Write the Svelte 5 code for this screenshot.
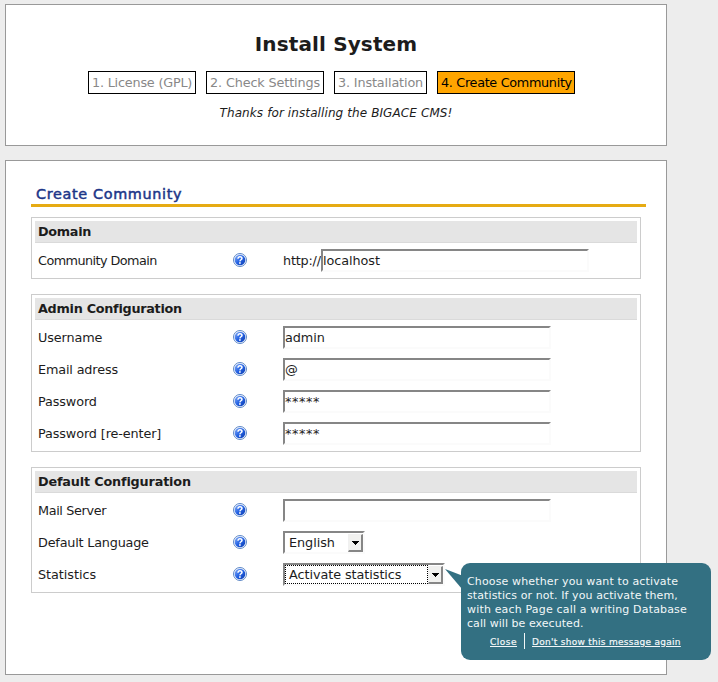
<script>
  // "track" is the letter spacing of a text, in pixels
  const steps = [
    { label: '1. License (GPL)', width: 108, track: -0.2 },
    { label: '2. Check Settings', width: 118, track: -0.13 },
    { label: '3. Installation', width: 93, track: -0.14 },
    { label: '4. Create Community', width: 138, track: -0.32, active: true }
  ];

  const groups = [
    {
      title: 'Domain',
      track: -0.3,
      rows: [{ label: 'Community Domain', track: -0.56, prefix: 'http://', kind: 'text', value: 'localhost' }]
    },
    {
      title: 'Admin Configuration',
      track: -0.28,
      rows: [
        { label: 'Username', track: -0.12, kind: 'text', value: 'admin' },
        { label: 'Email adress', track: -0.15, kind: 'text', value: '@' },
        { label: 'Password', track: -0.12, kind: 'secret', value: '*****' },
        { label: 'Password [re-enter]', track: -0.12, kind: 'secret', value: '*****' }
      ]
    },
    {
      title: 'Default Configuration',
      track: -0.17,
      rows: [
        { label: 'Mail Server', track: -0.36, kind: 'text', value: '' },
        { label: 'Default Language', track: -0.2, kind: 'select', value: 'English', width: 82 },
        { label: 'Statistics', track: -0.05, kind: 'select', value: 'Activate statistics', width: 162, focused: true, tip: true }
      ]
    }
  ];

  const tipLines = [
    { text: 'Choose whether you want to activate', track: 0.14 },
    { text: 'statistics or not. If you activate them,', track: 0.1 },
    { text: 'with each Page call a writing Database', track: 0.17 },
    { text: 'call will be executed.', track: 0.05 }
  ];
</script>

<div class="page">
  <header class="panel top">
    <h1>Install System</h1>
    <div class="steps">
      {#each steps as s}
        <div class="step" class:active={s.active} style="width: {s.width}px; letter-spacing: {s.track}px">{s.label}</div>
      {/each}
    </div>
    <p class="thanks">Thanks for installing the BIGACE CMS!</p>
  </header>

  <main class="panel body">
    <h2>Create Community</h2>
    {#each groups as g}
      <section class="group">
        <h3 style="letter-spacing: {g.track}px">{g.title}</h3>
        {#each g.rows as r}
          <div class="row">
            <span class="label" style="letter-spacing: {r.track}px">{r.label}</span>
            <svg class="help" width="16" height="16" viewBox="0 0 16 16" aria-hidden="true">
              <defs>
                <linearGradient id="orb" x1="0" y1="0" x2="1" y2="1">
                  <stop offset="0" stop-color="#8fb4f8" />
                  <stop offset="0.5" stop-color="#2563e4" />
                  <stop offset="1" stop-color="#0b3bae" />
                </linearGradient>
              </defs>
              <circle cx="8" cy="8" r="6.5" fill="#f4f8ff" stroke="#5e88c6" stroke-width="1" />
              <circle cx="8" cy="8" r="5.3" fill="url(#orb)" />
              <path d="M6 6.8C5.8 4.1 10.1 4.1 10 6.4C9.9 7.8 8.1 7.7 7.9 9.3" fill="none" stroke="#fff" stroke-width="1.5" />
              <rect x="7.1" y="10.2" width="1.6" height="1.6" fill="#fff" />
            </svg>
            <div class="field">
              {#if r.prefix}<span class="prefix">{r.prefix}</span>{/if}
              {#if r.kind === 'select'}
                <div class="control select" style="width: {r.width}px">
                  <span class="choice" class:focused={r.focused}>{r.value}</span>
                  <span class="drop">
                    <svg width="8" height="4" viewBox="0 0 8 4" shape-rendering="crispEdges"><path d="M0 0H8L4 4Z" fill="#000" /></svg>
                  </span>
                </div>
              {:else}
                <div class="control input" class:secret={r.kind === 'secret'}>{r.value}</div>
              {/if}
              {#if r.tip}
                <aside class="tip">
                  <svg class="tail" width="17" height="20" viewBox="0 0 17 20"><path d="M0 0L17 6.5V20Z" fill="#337082" /></svg>
                  {#each tipLines as line}
                    <div class="line" style="letter-spacing: {line.track}px">{line.text}</div>
                  {/each}
                  <div class="actions"><span class="link close">Close</span><i></i><span class="link again">Don't show this message again</span></div>
                </aside>
              {/if}
            </div>
          </div>
        {/each}
      </section>
    {/each}
  </main>
</div>

<style>
  :global(body) { background: #ededed; }
  .page {
    box-sizing: border-box;
    width: 718px;
    height: 682px;
    padding: 4px 5px;
    background: #ededed;
    color: #1c1c1c;
    font-family: 'DejaVu Sans', Verdana, sans-serif;
    font-size: 12.8px;
    overflow: hidden;
  }
  .panel {
    box-sizing: border-box;
    width: 662px;
    border: 1px solid #999;
    background: #fff;
  }
  .top { height: 142px; padding-top: 26px; }
  .body { height: 515px; margin-top: 14px; padding: 22px 20px 0 25px; }
  h1 {
    margin: 0;
    font-size: 20px;
    letter-spacing: 0.14px;
    line-height: 26px;
    text-align: center;
  }
  .steps {
    display: flex;
    gap: 10px;
    margin: 14px 0 0 82px;
  }
  .step {
    box-sizing: border-box;
    height: 23px;
    padding-left: 3px;
    border: 1px solid #000;
    color: #888;
    line-height: 21px;
    white-space: nowrap;
  }
  .active { background: #ffa500; color: #000; }
  .thanks {
    margin: 10px 0 0;
    font-size: 12px;
    font-style: italic;
    letter-spacing: 0.1px;
    line-height: 18px;
    text-align: center;
  }
  h2 {
    box-sizing: border-box;
    height: 24px;
    margin: 0 0 10px;
    padding: 1px 0 0 5px;
    border-bottom: 3px solid #e6ab13;
    color: #1c3688;
    font-size: 14.4px;
    font-weight: 400;
    letter-spacing: 0.66px;
    line-height: 21px;
    -webkit-text-stroke: 0.5px #1c3688;
  }
  .group {
    box-sizing: border-box;
    width: 610px;
    margin-bottom: 15px;
    padding: 3px;
    border: 1px solid #ccc;
  }
  h3 {
    box-sizing: border-box;
    width: 602px;
    height: 22px;
    margin: 0;
    padding-left: 3px;
    border-bottom: 1px solid #dadada;
    background: #e5e5e5;
    font-size: 12.8px;
    line-height: 21px;
  }
  .row {
    box-sizing: border-box;
    display: flex;
    align-items: flex-start;
    height: 32px;
    padding: 6px 0 0 3px;
  }
  .label { width: 194px; line-height: 23px; }
  .help { flex: none; margin-top: 3px; }
  .field { position: relative; display: flex; margin-left: 35px; }
  .prefix { width: 38px; letter-spacing: -0.2px; line-height: 23px; }
  .control {
    box-sizing: border-box;
    height: 23px;
    border: 2px solid;
    border-color: #868686 #fbfbfb #fbfbfb #868686;
    background: #fff;
    letter-spacing: -0.06px;
    line-height: 19px;
    white-space: nowrap;
  }
  .input { width: 268px; }
  .secret { letter-spacing: 0.6px; }
  .select { display: flex; }
  .choice {
    box-sizing: border-box;
    flex: 1;
    height: 19px;
    padding-left: 4px;
    line-height: 19px;
  }
  .focused { padding-left: 3px; border: 1px dotted #000; line-height: 17px; }
  .drop {
    box-sizing: border-box;
    display: flex;
    flex: none;
    align-items: center;
    justify-content: center;
    width: 15px;
    height: 18px;
    margin-top: 1px;
    border: 1px solid #f0f0f0;
    border-right: 2px solid #868686;
    border-bottom: 2px solid #868686;
    background: #f1f1ef;
  }
  .tip {
    position: absolute;
    z-index: 2;
    top: 0;
    left: 178px;
    box-sizing: border-box;
    width: 250px;
    height: 97px;
    padding: 12px 0 0 6px;
    border-radius: 9px;
    background: #337082;
    color: #f2f7f8;
    font-size: 11px;
  }
  .tail { position: absolute; top: 6px; left: -16px; }
  .line { height: 14px; line-height: 14px; white-space: nowrap; }
  .actions {
    display: flex;
    align-items: center;
    height: 16px;
    margin: 2px 0 0 23px;
    font-size: 9px;
    line-height: 16px;
    white-space: nowrap;
  }
  .link {
    padding-top: 1px;
    text-decoration: underline;
    -webkit-text-stroke: 0.2px #f2f7f8;
  }
  .close { letter-spacing: 0.5px; }
  .again { letter-spacing: 0.28px; }
  .actions i { width: 1px; height: 16px; margin: 0 7px; background: #f2f7f8; }
</style>
